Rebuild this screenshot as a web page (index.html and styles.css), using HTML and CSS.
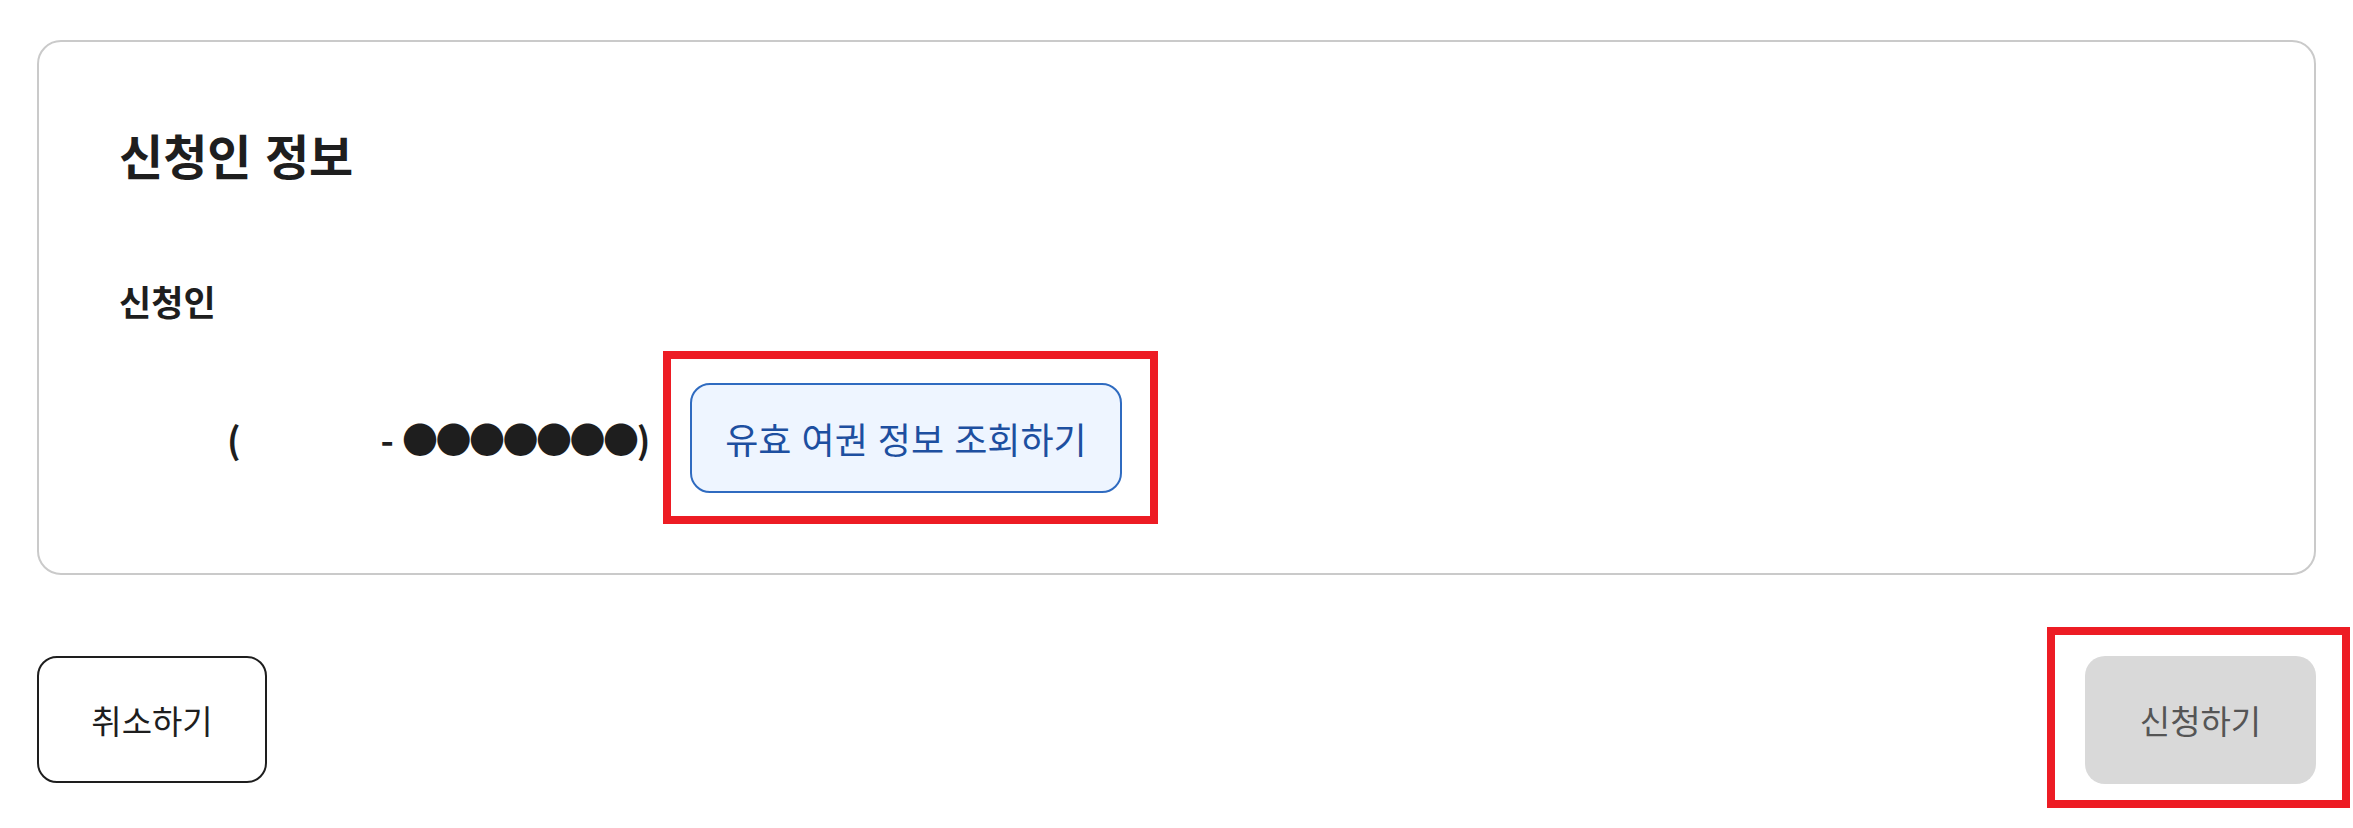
FILE: index.html
```html
<!DOCTYPE html>
<html lang="ko">
<head>
  <meta charset="UTF-8" />
  <meta name="viewport" content="width=device-width, initial-scale=1.0"/>
  <title>신청인 정보</title>
  <link rel="stylesheet" href="styles.css">
</head>
<body>
  <main class="page">
    <!-- Applicant info card -->
    <section class="card">
      <h2 class="card-title">신청인 정보</h2>
      <h3 class="field-label">신청인</h3>
      <div class="applicant-row">
        <span class="applicant-name"></span>
        <span class="applicant-id">(<span class="id-front"></span>- <span class="id-dots">●●●●●●●</span>)</span>
        <span class="mark mark-passport">
          <button class="btn-passport" type="button">유효 여권 정보 조회하기</button>
        </span>
      </div>
    </section>

    <!-- Bottom actions -->
    <div class="actions">
      <button class="btn btn-cancel" type="button">취소하기</button>
      <span class="mark mark-submit">
        <button class="btn btn-submit" type="button" disabled>신청하기</button>
      </span>
    </div>
  </main>
</body>
</html>
```

FILE: styles.css
```css
/* Base */
html, body {
  margin: 0;
}
body {
  box-sizing: border-box;
  min-height: 100vh;
  padding: 40px 37px 0;
  font-family: "Noto Sans CJK KR", "Noto Sans", sans-serif;
  color: #1e1e1e;
  background-color: #fff;
}

/* Card */
.card {
  border: 2px solid #cacaca;
  border-radius: 24px;
  padding: 88px 80px 80px;
}
.card-title {
  margin: 0;
  font-size: 48px;
  line-height: 1;
  font-weight: 700;
}
.field-label {
  margin: 105px 0 0;
  font-size: 35px;
  line-height: 1;
  font-weight: 700;
}

/* Applicant row */
.applicant-row {
  display: flex;
  align-items: center;
  margin-top: 65px;
}
.applicant-name {
  display: inline-block;
  width: 108px;
}
.applicant-id {
  font-size: 36px;
  font-weight: 700;
  line-height: 1;
  white-space: nowrap;
}
.id-front {
  display: inline-block;
  width: 140px;
}
.id-dots {
  letter-spacing: -2.5px;
}
.btn-passport {
  margin-left: 40px;
  height: 110px;
  padding: 0 33px;
  border: 2px solid #2f6bc0;
  border-radius: 20px;
  background-color: #eef5ff;
  color: #1d4fa0;
  font-family: inherit;
  font-size: 36px;
  cursor: pointer;
}

/* Red highlight marks */
.mark {
  position: relative;
  display: inline-block;
  line-height: 0;
}
.mark::after {
  content: "";
  position: absolute;
  border: 8px solid #ed1c24;
  pointer-events: none;
}
.mark-passport::after {
  left: 13px;
  right: -36px;
  top: -32px;
  bottom: -31px;
}
.mark-submit::after {
  left: -38px;
  right: -34px;
  top: -29px;
  bottom: -24px;
}

/* Bottom actions */
.actions {
  display: flex;
  justify-content: space-between;
  align-items: flex-start;
  margin-top: 81px;
}
.btn {
  width: 230px;
  height: 127px;
  border-radius: 20px;
  font-family: inherit;
  font-size: 33px;
  cursor: pointer;
}
.btn-cancel {
  border: 2px solid #1e1e1e;
  background-color: #fff;
  color: #1e1e1e;
}
.btn-submit {
  width: 231px;
  height: 128px;
  border: none;
  background-color: #d9d9d9;
  color: #555;
  cursor: default;
}
```
